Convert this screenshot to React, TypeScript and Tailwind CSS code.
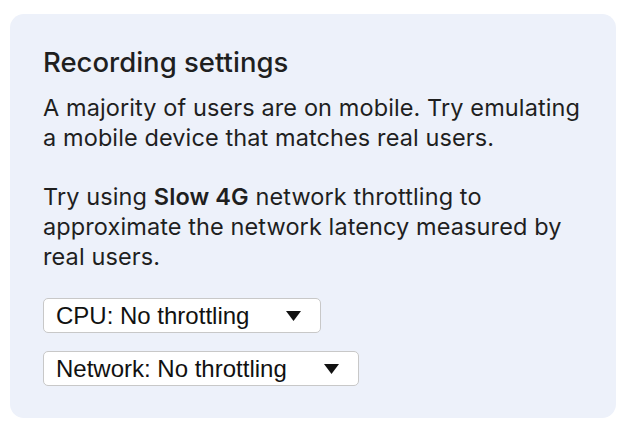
function Caret() {
  return (
    <svg width="15" height="10" viewBox="0 0 15 10" className="shrink-0">
      <path d="M0 0 H15 L7.5 10 Z" fill="#111" />
    </svg>
  );
}

function FakeSelect({ label }: { label: string }) {
  return (
    <div className="inline-flex h-[35px] items-center gap-[37px] self-start rounded-[5px] border border-[#c8c8c8] bg-white pl-[12px] pr-[19px] font-['Liberation_Sans',Arial,sans-serif] text-[24px] text-[#111]">
      <span>{label}</span>
      <Caret />
    </div>
  );
}

export default function App() {
  return (
    <div className="min-h-[430px] bg-white pl-[10px] pt-[14px]">
      <div className="flex h-[404px] w-[606px] flex-col rounded-[14px] bg-[#edf1fa] pl-[33px] pt-[32px] font-['Inter','Noto_Sans',sans-serif] text-[#1f1f1f]">
        <h2 className="text-[27.5px] font-medium leading-[32px]">Recording settings</h2>
        <p className="mt-[15px] text-[23.5px] leading-[30px] tracking-[0.1px]">
          A majority of users are on mobile. Try emulating
          <br />
          a mobile device that matches real users.
        </p>
        <p className="mt-[29px] text-[23.5px] leading-[30px] tracking-[0.1px]">
          Try using <b className="font-semibold">Slow 4G</b> network throttling to
          <br />
          approximate the network latency measured by
          <br />
          real users.
        </p>
        <div className="mt-[26px] flex flex-col gap-[18px]">
          <FakeSelect label="CPU: No throttling" />
          <FakeSelect label="Network: No throttling" />
        </div>
      </div>
    </div>
  );
}
